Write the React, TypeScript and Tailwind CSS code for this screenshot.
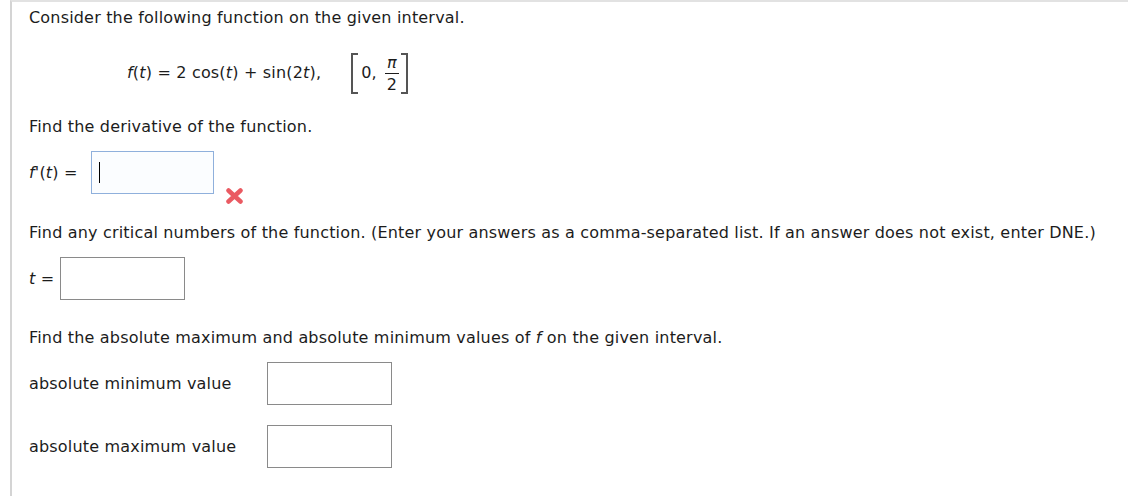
import React from "react";

// Question card: find derivative, critical numbers and absolute extrema
const Box = ({ className = "" }: { className?: string }) => (
  <div className={`h-[43px] w-[125px] border border-[#8a8a8a] bg-white ${className}`} />
);

const WrongMark = () => (
  <svg width="19" height="16" viewBox="0 0 19 16" className="block">
    <path d="M3.5 2.5 L15.5 13.5 M15.5 2.5 L3.5 13.5" stroke="#ea5a62" strokeWidth="4.5" strokeLinecap="round" />
  </svg>
);

export default function App() {
  return (
    <div className="h-[496px] w-[1128px] bg-white pl-[10px] font-['DejaVu_Sans',Verdana,sans-serif] text-[16px] tracking-[0.18px] text-[#1c1c1c]">
      <div className="h-full border-l-2 border-t-2 border-l-[#d4d4d4] border-t-[#e2e2e2] pl-[17px] pt-[6px]">
        <p className="leading-[20px]">Consider the following function on the given interval.</p>

        <div className="mt-[23px] flex h-[44px] items-center pl-[98px]">
          <span>
            <i>f</i>(<i>t</i>) = 2 cos(<i>t</i>) + sin(2<i>t</i>),
          </span>
          <span className="ml-[30px] flex items-center">
            <span className="h-[41px] w-[7px] border-y-2 border-l-2 border-[#555]" />
            <span className="ml-[3px]">0,</span>
            <span className="ml-[8px] flex flex-col items-center">
              <i className="leading-[19px]">π</i>
              <span className="my-[1px] h-px w-[14px] bg-[#1c1c1c]" />
              <span className="leading-[19px]">2</span>
            </span>
            <span className="ml-[2px] h-[41px] w-[7px] border-y-2 border-r-2 border-[#555]" />
          </span>
        </div>

        <p className="mt-[22px] leading-[20px]">Find the derivative of the function.</p>

        <div className="mt-[14px] flex items-start">
          <div className="flex h-[43px] items-center">
            <span>
              <i>f</i>&#39;(<i>t</i>) =
            </span>
          </div>
          <div className="ml-[13px] flex h-[43px] w-[123px] items-center border border-[#8fb0dc] bg-[#fbfdff] pl-[7px]">
            <span className="h-[21px] w-px bg-black" />
          </div>
          <div className="ml-[11px] mt-[37px]">
            <WrongMark />
          </div>
        </div>

        <p className="mt-[19px] leading-[20px]">
          Find any critical numbers of the function. (Enter your answers as a comma-separated list. If an answer does not exist, enter DNE.)
        </p>

        <div className="mt-[14px] flex items-center">
          <span>
            <i>t</i> =
          </span>
          <Box className="ml-[6px]" />
        </div>

        <p className="mt-[28px] leading-[20px]">
          Find the absolute maximum and absolute minimum values of <i>f</i> on the given interval.
        </p>

        <div className="mt-[14px] flex items-center">
          <span className="w-[238px]">absolute minimum value</span>
          <Box />
        </div>

        <div className="mt-[20px] flex items-center">
          <span className="w-[238px]">absolute maximum value</span>
          <Box />
        </div>
      </div>
    </div>
  );
}
